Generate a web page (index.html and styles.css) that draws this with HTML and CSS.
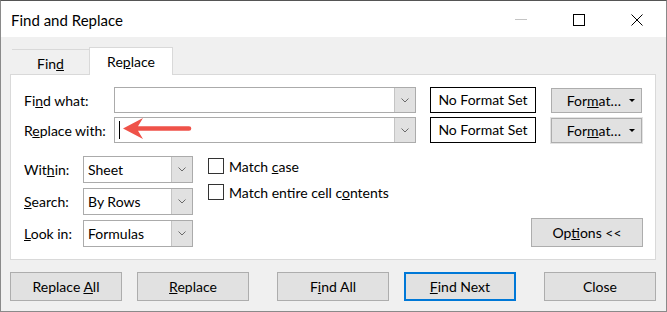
FILE: index.html
```html
<!DOCTYPE html>
<html lang="en">

<head>
    <meta charset="UTF-8">
    <title>Find and Replace</title>
    <link rel="stylesheet" href="styles.css">
</head>

<body>
    <div class="window">
        <div class="titlebar">
            <span class="title">Find and Replace</span>
            <div class="controls">
                <span class="ctl">
                    <svg width="12" height="12" viewBox="0 0 12 12"><line x1="0" y1="5.5" x2="12" y2="5.5" stroke="#c4c4c4" stroke-width="1"/></svg>
                </span>
                <span class="ctl">
                    <svg width="12" height="12" viewBox="0 0 12 12"><rect x="0.5" y="0.5" width="11" height="11" fill="none" stroke="#000" stroke-width="1"/></svg>
                </span>
                <span class="ctl">
                    <svg width="12" height="12" viewBox="0 0 12 12"><path d="M0.5 0.5 L11.5 11.5 M11.5 0.5 L0.5 11.5" stroke="#000" stroke-width="1" fill="none"/></svg>
                </span>
            </div>
        </div>

        <div class="content">
            <div class="tabs">
                <div class="tab"><span>Fin<u>d</u></span></div>
                <div class="tab active"><span>Re<u>p</u>lace</span></div>
            </div>

            <div class="panel">
                <div class="find-row">
                    <span class="lbl wide-lbl">Fi<u>n</u>d what:</span>
                    <div class="combo big">
                        <span class="field"></span>
                        <span class="drop"><svg width="8" height="5" viewBox="0 0 8 5"><polyline points="0.5,0.5 4,4 7.5,0.5" fill="none" stroke="#6a6a6a" stroke-width="1"/></svg></span>
                    </div>
                    <div class="noformat">No Format Set</div>
                    <button class="btn format"><span>For<u>m</u>at…</span><span class="caret"></span></button>
                </div>
                <div class="find-row">
                    <span class="lbl wide-lbl">R<u>e</u>place with:</span>
                    <div class="combo big">
                        <span class="field">
                            <span class="cursor"></span>
                            <svg class="pointer" width="70" height="23" viewBox="0 0 70 23"><path d="M1 11.5 L21 1 L16 9.2 L67 9.2 A2.3 2.3 0 0 1 67 13.8 L16 13.8 L21 22 Z" fill="#ef5249"/></svg>
                        </span>
                        <span class="drop"><svg width="8" height="5" viewBox="0 0 8 5"><polyline points="0.5,0.5 4,4 7.5,0.5" fill="none" stroke="#6a6a6a" stroke-width="1"/></svg></span>
                    </div>
                    <div class="noformat">No Format Set</div>
                    <button class="btn format focus"><span>For<u>m</u>at…</span><span class="caret"></span></button>
                </div>

                <div class="options">
                    <div class="selects">
                        <span class="lbl">Wit<u>h</u>in:</span>
                        <div class="combo small">
                            <span class="field">Sheet</span>
                            <span class="drop"><svg width="8" height="5" viewBox="0 0 8 5"><polyline points="0.5,0.5 4,4 7.5,0.5" fill="none" stroke="#6a6a6a" stroke-width="1"/></svg></span>
                        </div>
                        <span class="lbl"><u>S</u>earch:</span>
                        <div class="combo small">
                            <span class="field">By Rows</span>
                            <span class="drop"><svg width="8" height="5" viewBox="0 0 8 5"><polyline points="0.5,0.5 4,4 7.5,0.5" fill="none" stroke="#6a6a6a" stroke-width="1"/></svg></span>
                        </div>
                        <span class="lbl"><u>L</u>ook in:</span>
                        <div class="combo small">
                            <span class="field">Formulas</span>
                            <span class="drop"><svg width="8" height="5" viewBox="0 0 8 5"><polyline points="0.5,0.5 4,4 7.5,0.5" fill="none" stroke="#6a6a6a" stroke-width="1"/></svg></span>
                        </div>
                    </div>
                    <div class="checks">
                        <div class="check"><span class="box"></span><span>Match <u>c</u>ase</span></div>
                        <div class="check"><span class="box"></span><span>Match entire cell c<u>o</u>ntents</span></div>
                    </div>
                    <button class="btn opts"><span>Op<u>t</u>ions &lt;&lt;</span></button>
                </div>
            </div>

            <div class="actions">
                <button class="btn act"><span>Replace <u>A</u>ll</span></button>
                <button class="btn act"><span><u>R</u>eplace</span></button>
                <button class="btn act far"><span>F<u>i</u>nd All</span></button>
                <button class="btn act default"><span><u>F</u>ind Next</span></button>
                <button class="btn act far"><span>Close</span></button>
            </div>
        </div>
    </div>
</body>

</html>
```

FILE: styles.css
```css
* {
    padding: 0;
    margin: 0;
    box-sizing: border-box;
}

body {
    font-family: "Segoe UI", Lato, "Noto Sans", sans-serif;
    font-size: 14px;
    color: #000;
    background: #fff;
}

u {
    text-underline-offset: 1px;
}

.window {
    width: 667px;
    height: 312px;
    border: 1px solid #8a8a8a;
    border-top-color: #555;
    background: #f0f0f0;
    display: flex;
    flex-direction: column;
}

.titlebar {
    height: 36px;
    background: #fff;
    display: flex;
    align-items: center;
    padding-left: 10px;
}

.title {
    font-size: 15px;
    padding-top: 2px;
}

.controls {
    margin-left: auto;
    display: flex;
    height: 100%;
}

.ctl {
    width: 58px;
    display: flex;
    align-items: center;
    justify-content: center;
    padding-top: 2px;
}

.content {
    padding: 10px 10px 0 9px;
}

/* tabs */
.tabs {
    display: flex;
    align-items: flex-end;
    height: 27px;
    margin-left: 2px;
}

.tab {
    height: 25px;
    width: 77px;
    border-top: 1px solid #d9d9d9;
    display: flex;
    align-items: center;
    justify-content: center;
    padding-top: 3px;
}

.tab.active {
    height: 28px;
    width: 84px;
    background: #fff;
    border: 1px solid #d9d9d9;
    border-bottom: none;
    margin-bottom: -1px;
    position: relative;
    z-index: 1;
    padding-top: 0;
}

.panel {
    background: #fff;
    border: 1px solid #d9d9d9;
    height: 186px;
    padding: 12px 12px 0 13px;
}

.find-row {
    display: flex;
    align-items: center;
    height: 26px;
}

.find-row + .find-row {
    margin-top: 4px;
}

.lbl {
    white-space: nowrap;
}

.wide-lbl {
    width: 90px;
}

/* combo boxes */
.combo {
    display: flex;
    height: 26px;
    border: 1px solid #ababab;
    background: #fff;
}

.combo.big {
    width: 302px;
}

.combo.small {
    width: 110px;
    height: 27px;
}

.field {
    flex: 1;
    position: relative;
    display: flex;
    align-items: center;
    padding-left: 4px;
}

.drop {
    width: 21px;
    background: #e1e1e1;
    border-left: 1px solid #c4c4c4;
    display: flex;
    align-items: center;
    justify-content: center;
}

.cursor {
    width: 1px;
    height: 18px;
    background: #000;
}

.pointer {
    position: absolute;
    left: 7px;
    top: -1px;
}

.noformat {
    width: 106px;
    height: 26px;
    margin-left: 14px;
    border: 1px solid #000;
    display: flex;
    align-items: center;
    justify-content: center;
    padding-bottom: 1px;
}

/* buttons */
.btn {
    font: inherit;
    color: #000;
    background: #e1e1e1;
    border: 1px solid #adadad;
    display: flex;
    align-items: center;
    justify-content: center;
    white-space: nowrap;
    flex-shrink: 0;
}

.btn.format {
    width: 91px;
    height: 25px;
    margin-left: 15px;
    justify-content: flex-end;
    padding-right: 6px;
    gap: 8px;
}

.btn.format.focus {
    outline: 1px solid #e3e3e3;
}

.caret {
    width: 0;
    height: 0;
    border-left: 3px solid transparent;
    border-right: 3px solid transparent;
    border-top: 3px solid #000;
}

.options {
    display: flex;
    margin-top: 13px;
}

.selects {
    display: grid;
    grid-template-columns: 59px 110px;
    row-gap: 5px;
    align-items: center;
}

.checks {
    margin-left: 15px;
    padding-top: 2px;
}

.check {
    display: flex;
    align-items: center;
    height: 16px;
    margin-bottom: 10px;
}

.box {
    width: 16px;
    height: 16px;
    border: 1px solid #333;
    background: #fff;
    margin-right: 5px;
}

.btn.opts {
    margin-left: auto;
    align-self: flex-end;
    width: 112px;
    height: 29px;
}

/* bottom row */
.actions {
    display: flex;
    gap: 15px;
    margin-top: 12px;
}

.btn.act {
    width: 112px;
    height: 29px;
}

.btn.act.far {
    margin-left: 13px;
}

.btn.act.default {
    border: 2px solid #0078d7;
}
```
